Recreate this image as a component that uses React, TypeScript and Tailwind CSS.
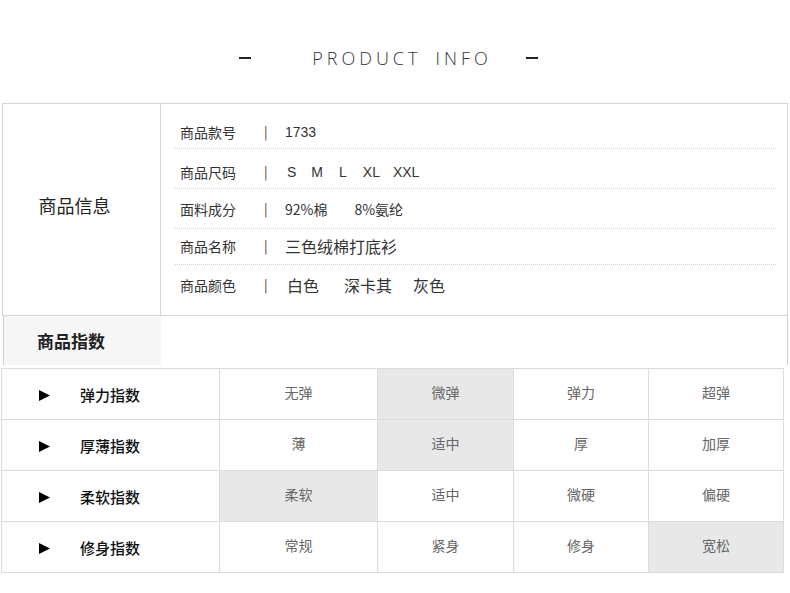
import React from "react";

const cjk = { fontFamily: '"Noto Sans CJK SC", "Noto Sans", sans-serif' };
const lat = { fontFamily: '"Liberation Sans", sans-serif' };

const infoRows = [
  { label: "商品款号", value: <span className="text-[14px]" style={lat}>1733</span>, h: "h-[45px]", pb: "pb-[6px]" },
  {
    label: "商品尺码",
    value: (
      <span className="flex text-[14px]" style={lat}>
        <span className="ml-[2px]">S</span>
        <span className="ml-[15px]">M</span>
        <span className="ml-[16px]">L</span>
        <span className="ml-[16px]">XL</span>
        <span className="ml-[13px]">XXL</span>
      </span>
    ),
    h: "h-[40px]",
    pb: "pb-[6px]",
  },
  {
    label: "面料成分",
    value: (
      <span className="flex text-[14px]">
        <span>92%棉</span>
        <span className="ml-[27px]">8%氨纶</span>
      </span>
    ),
    h: "h-[40px]",
    pb: "pb-[9px]",
  },
  { label: "商品名称", value: <span className="text-[16px]">三色绒棉打底衫</span>, h: "h-[36px]", pb: "pb-[8px]" },
];

const indexRows = [
  { label: "弹力指数", values: ["无弹", "微弹", "弹力", "超弹"], active: 1 },
  { label: "厚薄指数", values: ["薄", "适中", "厚", "加厚"], active: 1 },
  { label: "柔软指数", values: ["柔软", "适中", "微硬", "偏硬"], active: 0 },
  { label: "修身指数", values: ["常规", "紧身", "修身", "宽松"], active: 3 },
];

function Tri() {
  return (
    <svg width="11" height="11" viewBox="0 0 11 11" className="block">
      <polygon points="0,0 11,5.5 0,11" fill="#000" />
    </svg>
  );
}

export default function App() {
  return (
    <div className="w-[790px] h-[593px] bg-white text-[#333]" style={cjk}>
      {/* title */}
      <div className="h-[103px] flex justify-center pt-[46px] pr-[13px]">
        <div className="flex items-center h-[24px]">
          <div className="w-[12px] h-[2px] bg-[#222]" />
          <div
            className="ml-[61px] text-[18px] tracking-[4px] text-[#333] font-light"
            style={{ fontFamily: '"Open Sans", "Noto Sans", sans-serif' }}
          >
            PRODUCT<span className="ml-[14px]">INFO</span>
          </div>
          <div className="ml-[34px] w-[12px] h-[2px] bg-[#222]" />
        </div>
      </div>

      {/* info box */}
      <div className="ml-[2px] w-[786px] h-[213px] border border-[#d6d6d6] flex">
        <div className="w-[158px] border-r border-[#d6d6d6] flex items-center justify-center pr-[14px] pb-[8px]">
          <span className="text-[18px] text-[#222]">商品信息</span>
        </div>
        <div className="flex-1 flex flex-col pl-[14px] pr-[11px]">
          {infoRows.map((r) => (
            <div
              key={r.label}
              className={`${r.h} ${r.pb} flex items-end pl-[5px] border-b border-dotted border-[#cfcfcf] text-[14px] text-[#333] leading-[20px]`}
            >
              <span className="w-[84px]">{r.label}</span>
              <span className="w-[21px] text-[13px]">|</span>
              {r.value}
            </div>
          ))}
          <div className="flex-1 flex items-start pt-[10px] pl-[5px] text-[14px] leading-[20px]">
            <span className="w-[84px]">商品颜色</span>
            <span className="w-[21px] text-[13px]">|</span>
            <span className="flex text-[16px] ml-[2px]">
              <span>白色</span>
              <span className="ml-[25px]">深卡其</span>
              <span className="ml-[21px]">灰色</span>
            </span>
          </div>
        </div>
      </div>

      {/* 商品指数 */}
      <div className="ml-[3px] w-[785px] h-[49px] border-l border-r border-[#cfcfcf] flex">
        <div className="w-[157px] bg-[#f6f6f6] flex items-center pl-[33px]">
          <span className="text-[17px] font-bold text-[#222]">商品指数</span>
        </div>
      </div>

      {/* table */}
      <div className="mt-[3px] ml-[1px] w-[783px] border-l border-t border-[#dcdcdc] grid grid-cols-[218px_158px_136px_135px_135px]">
        {indexRows.map((row) => (
          <React.Fragment key={row.label}>
            <div className="h-[51px] border-r border-b border-[#dcdcdc] flex items-center pt-[3px]">
              <div className="ml-[37px]">
                <Tri />
              </div>
              <span className="ml-[30px] text-[15px] font-medium text-[#111]">{row.label}</span>
            </div>
            {row.values.map((v, i) => (
              <div
                key={i}
                className={`h-[51px] border-r border-b border-[#dcdcdc] flex items-center justify-center pb-[4px] text-[14px] text-[#666] ${
                  i === row.active ? "bg-[#e8e8e8]" : "bg-white"
                }`}
              >
                {v}
              </div>
            ))}
          </React.Fragment>
        ))}
      </div>
    </div>
  );
}
